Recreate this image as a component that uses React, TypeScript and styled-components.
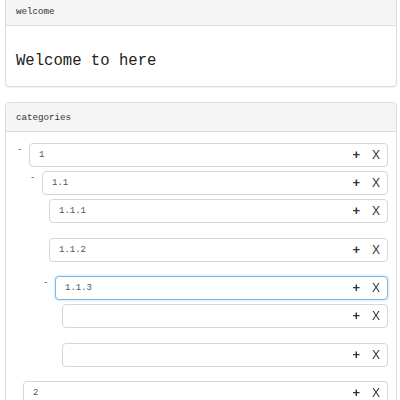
import React, { useEffect, useRef } from "react";
import styled, { createGlobalStyle, css } from "styled-components";

const GlobalStyle = createGlobalStyle`
  html, body { margin: 0; padding: 0; background: #fff; }
  body { font-family: "Liberation Mono", "DejaVu Sans Mono", monospace; color: #333; }
  * { box-sizing: border-box; }
`;

const Page = styled.div`
  display: flex;
  flex-direction: column;
  gap: 15px;
  padding: 0 3px 0 5px;
  margin-top: -4px;
`;

const Panel = styled.section`
  border: 1px solid #ddd;
  border-radius: 4px;
  background: #fff;
  box-shadow: 0 1px 1px rgba(0, 0, 0, 0.05);
  overflow: hidden;
`;

const PanelHeading = styled.div`
  background: #f5f5f5;
  border-bottom: 1px solid #ddd;
  padding: 8px 10px 7px;
  font-size: 9.2px;
  line-height: 13px;
  color: #333;
`;

const WelcomeBody = styled.div`
  padding: 20px 10px 10px;
  font-size: 15.6px;
  line-height: 30px;
  color: #222;
`;

const TreeBody = styled.div`
  padding: 11px 8px 10px 11px;
`;

const Row = styled.div<{ $level: number; $leaf: boolean }>`
  display: flex;
  align-items: flex-start;
  margin-left: ${(p) => p.$level * 13}px;
  margin-bottom: ${(p) => (p.$leaf ? 14.5 : 4)}px;
`;

const Toggle = styled.span<{ $open: boolean }>`
  flex: none;
  width: ${(p) => (p.$open ? 12 : 6)}px;
  font-size: 9px;
  line-height: 10px;
  padding-top: 2px;
  color: #555;
`;

const Field = styled.div<{ $focused?: boolean }>`
  flex: 1;
  display: flex;
  align-items: center;
  height: 24px;
  border: 1px solid #d6d6d6;
  border-radius: 4px;
  background: #fff;
  padding: 0 7px 0 9px;
  ${(p) =>
    p.$focused &&
    css`
      border-color: #7cb8e8;
      box-shadow: 0 0 3px rgba(102, 175, 233, 0.55);
    `}
`;

const FieldInput = styled.input`
  flex: 1;
  min-width: 0;
  border: none;
  outline: none;
  background: transparent;
  padding: 0;
  margin: 0;
  font-family: "Liberation Mono", "DejaVu Sans Mono", monospace;
  font-size: 9px;
  color: #555;
  caret-color: #222;
`;

const Action = styled.span<{ $width: number; $size: number; $bold?: boolean }>`
  flex: none;
  width: ${(p) => p.$width}px;
  text-align: right;
  font-family: "Liberation Sans", Arial, sans-serif;
  font-size: ${(p) => p.$size}px;
  font-weight: ${(p) => (p.$bold ? 700 : 400)};
  line-height: 16px;
  color: #333;
  cursor: pointer;
`;

type Node = { label: string; focused?: boolean; children?: Node[] };

const tree: Node[] = [
  {
    label: "1",
    children: [
      {
        label: "1.1",
        children: [
          { label: "1.1.1" },
          { label: "1.1.2" },
          { label: "1.1.3", focused: true, children: [{ label: "" }, { label: "" }] },
        ],
      },
    ],
  },
  { label: "2" },
];

function FocusedInput({ value }: { value: string }) {
  const ref = useRef<HTMLInputElement>(null);
  useEffect(() => {
    const el = ref.current;
    if (el) {
      el.focus();
      el.setSelectionRange(value.length, value.length);
    }
  }, [value]);
  return <FieldInput ref={ref} defaultValue={value} />;
}

function TreeNode({ node, level }: { node: Node; level: number }) {
  const hasChildren = !!node.children && node.children.length > 0;
  return (
    <>
      <Row $level={level} $leaf={!hasChildren}>
        <Toggle $open={hasChildren}>{hasChildren ? "-" : ""}</Toggle>
        <Field $focused={node.focused}>
          {node.focused ? <FocusedInput value={node.label} /> : <FieldInput defaultValue={node.label} />}
          <Action $width={10} $size={13} $bold>+</Action>
          <Action $width={20} $size={12}>X</Action>
        </Field>
      </Row>
      {node.children?.map((c, i) => (
        <TreeNode key={i} node={c} level={level + 1} />
      ))}
    </>
  );
}

export default function App() {
  return (
    <>
      <GlobalStyle />
      <Page>
        <Panel>
          <PanelHeading>welcome</PanelHeading>
          <WelcomeBody>Welcome to here</WelcomeBody>
        </Panel>
        <Panel>
          <PanelHeading>categories</PanelHeading>
          <TreeBody>
            {tree.map((n, i) => (
              <TreeNode key={i} node={n} level={0} />
            ))}
          </TreeBody>
        </Panel>
      </Page>
    </>
  );
}
